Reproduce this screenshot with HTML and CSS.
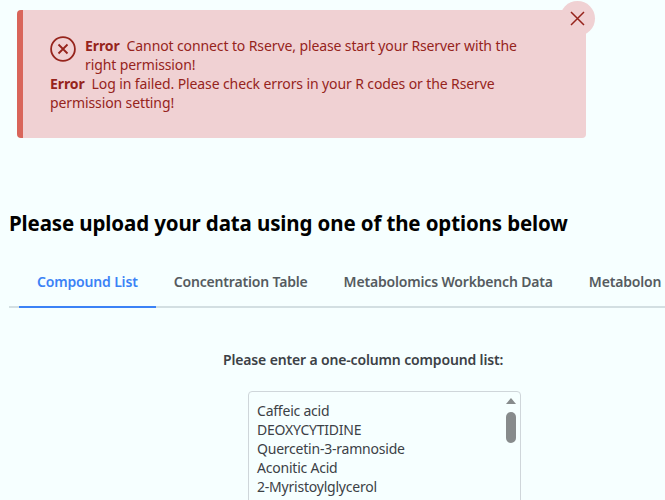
FILE: index.html
```html
<!DOCTYPE html>
<html lang="en">
<head>
    <meta charset="UTF-8">
    <meta name="viewport" content="width=device-width, initial-scale=1.0">
    <title>Upload data</title>
    <link rel="stylesheet" href="styles.css">
</head>
<body>

<div class="alert">
    <button class="alert-close" aria-label="Close">
        <svg width="15" height="15" viewBox="0 0 15 15"><path d="M1 1L14 14M14 1L1 14" fill="none" stroke="#96241c" stroke-width="1.5"/></svg>
    </button>
    <div class="alert-body">
        <svg class="alert-icon" width="26" height="26" viewBox="0 0 26 26"><circle cx="13" cy="13" r="11.9" fill="none" stroke="#96241c" stroke-width="1.8"/><path d="M8.5 8.5L17.5 17.5M17.5 8.5L8.5 17.5" fill="none" stroke="#96241c" stroke-width="1.8"/></svg>
        <b>Error</b>&nbsp; Cannot connect to Rserve, please start your Rserver with the right permission!<br>
        <b>Error</b>&nbsp; Log in failed. Please check errors in your R codes or the Rserve permission setting!
    </div>
</div>

<h2 class="title">Please upload your data using one of the options below</h2>

<div class="tabs">
    <div class="tab active">Compound List</div>
    <div class="tab">Concentration Table</div>
    <div class="tab">Metabolomics Workbench Data</div>
    <div class="tab">Metabolon Data</div>
</div>

<div class="panel">
    <label class="panel-label">Please enter a one-column compound list:</label>
    <div class="list-box">
        <div class="list-text">Caffeic acid<br>DEOXYCYTIDINE<br>Quercetin-3-ramnoside<br>Aconitic Acid<br>2-Myristoylglycerol</div>
        <div class="scroll">
            <div class="scroll-up"></div>
            <div class="scroll-thumb"></div>
        </div>
    </div>
</div>

</body>
</html>
```

FILE: styles.css
```css
html, body {
    height: 500px;
    overflow: hidden;
}
body {
    font-family: "Noto Sans", "Open Sans", sans-serif;
    font-size: 14px;
    background-color: #f6ffff;
    margin: 0;
    padding: 10px 0 0 9px;
    box-sizing: border-box;
}
.alert {
    position: relative;
    box-sizing: border-box;
    width: 569px;
    height: 128px;
    margin-left: 8px;
    padding: 26px 60px 0 27px;
    background-color: #f0d1d3;
    border-left: 6px solid #d9655a;
    border-radius: 4px;
    color: #96241c;
    line-height: 19px;
    letter-spacing: -0.11px;
}
.alert-icon {
    float: left;
    margin: 0 9px 0 0;
}
.alert-close {
    position: absolute;
    top: -9px;
    right: -9px;
    width: 35px;
    height: 35px;
    padding: 0;
    border: none;
    border-radius: 50%;
    background-color: #f0d1d3;
    display: flex;
    align-items: center;
    justify-content: center;
}
.title {
    margin: 72px 0 0;
    font-size: 20.5px;
    line-height: 26px;
    font-weight: 700;
    color: #000;
    letter-spacing: -0.13px;
}
.tabs {
    display: flex;
    margin-top: 36px;
    width: 700px;
    border-bottom: 2px solid #d3dfe2;
    white-space: nowrap;
}
.tab {
    padding: 0 18px 14px;
    margin-bottom: -2px;
    font-weight: 600;
    line-height: 20px;
    color: #555b60;
    letter-spacing: -0.17px;
    border-bottom: 2px solid transparent;
}
.tab:first-child {
    margin-left: 10px;
}
.tab.active {
    color: #3b82f6;
    border-bottom-color: #3b82f6;
}
.panel {
    margin-top: 42px;
    padding-left: 214px;
}
.panel-label {
    display: block;
    font-weight: 600;
    line-height: 20px;
    color: #3c4146;
    letter-spacing: -0.15px;
}
.list-box {
    display: flex;
    justify-content: space-between;
    box-sizing: border-box;
    width: 273px;
    height: 130px;
    margin: 21px 0 0 25px;
    padding: 9px 4px 0 8px;
    border: 1px solid #cfd6da;
    border-radius: 4px;
    color: #3c4146;
    line-height: 19px;
    letter-spacing: -0.22px;
    overflow: hidden;
}
.scroll {
    display: flex;
    flex-direction: column;
    align-items: center;
    width: 10px;
    margin-top: -3px;
}
.scroll-up {
    width: 0;
    height: 0;
    border-left: 5.5px solid transparent;
    border-right: 5.5px solid transparent;
    border-bottom: 6px solid #878b8c;
}
.scroll-thumb {
    width: 10px;
    height: 31px;
    margin-top: 8px;
    border-radius: 5px;
    background-color: #878b8c;
}
```
